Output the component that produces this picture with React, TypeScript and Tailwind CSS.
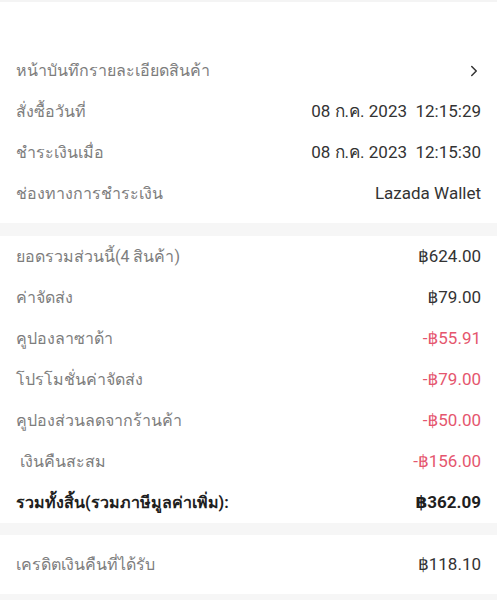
import { ChevronRight } from 'lucide-react';

type Row = {
  label: string;
  value: string;
  tone?: 'normal' | 'red' | 'bold';
};

const orderRows: Row[] = [
  { label: 'สั่งซื้อวันที่', value: '08 ก.ค. 2023  12:15:29' },
  { label: 'ชำระเงินเมื่อ', value: '08 ก.ค. 2023  12:15:30' },
  { label: 'ช่องทางการชำระเงิน', value: 'Lazada Wallet' },
];

const priceRows: Row[] = [
  { label: 'ยอดรวมส่วนนี้(4 สินค้า)', value: '฿624.00' },
  { label: 'ค่าจัดส่ง', value: '฿79.00' },
  { label: 'คูปองลาซาด้า', value: '-฿55.91', tone: 'red' },
  { label: 'โปรโมชั่นค่าจัดส่ง', value: '-฿79.00', tone: 'red' },
  { label: 'คูปองส่วนลดจากร้านค้า', value: '-฿50.00', tone: 'red' },
  { label: ' เงินคืนสะสม', value: '-฿156.00', tone: 'red' },
  { label: 'รวมทั้งสิ้น(รวมภาษีมูลค่าเพิ่ม):', value: '฿362.09', tone: 'bold' },
];

function InfoRow({ row }: { row: Row }) {
  const bold = row.tone === 'bold';
  const valueColor =
    row.tone === 'red' ? 'text-[#e5566e]' : bold ? 'text-[#1f1f1f] font-bold' : 'text-[#333333]';
  return (
    <div className="flex h-[41px] items-center justify-between px-4">
      <span
        className={`whitespace-pre text-[16px] ${bold ? 'font-bold text-[#1f1f1f]' : 'text-[#7d7d7d]'}`}
      >
        {row.label}
      </span>
      <span className={`whitespace-pre text-[17px] ${valueColor}`}>{row.value}</span>
    </div>
  );
}

export default function App() {
  return (
    <div
      className="min-h-[600px] bg-[#f6f6f6]"
      style={{ fontFamily: 'Roboto, "Noto Sans", "DejaVu Sans", sans-serif' }}
    >
      {/* ส่วนข้อมูลคำสั่งซื้อ */}
      <div className="border-t-2 border-[#f4f4f4] bg-white pb-[9px] pt-[48px]">
        <div className="flex h-[41px] items-center justify-between px-4">
          <span className="text-[16px] text-[#7d7d7d]">หน้าบันทึกรายละเอียดสินค้า</span>
          <ChevronRight size={18} strokeWidth={2} className="mr-[-2px] text-[#333333]" />
        </div>
        {orderRows.map((row) => (
          <InfoRow key={row.label} row={row} />
        ))}
      </div>

      {/* ส่วนสรุปราคา */}
      <div className="mt-[13px] bg-white">
        {priceRows.map((row) => (
          <InfoRow key={row.label} row={row} />
        ))}
      </div>

      {/* เครดิตเงินคืน */}
      <div className="mt-[12px] flex h-[59px] items-center justify-between bg-white px-4">
        <span className="text-[16px] text-[#7d7d7d]">เครดิตเงินคืนที่ได้รับ</span>
        <span className="text-[17px] text-[#333333]">฿118.10</span>
      </div>
    </div>
  );
}
